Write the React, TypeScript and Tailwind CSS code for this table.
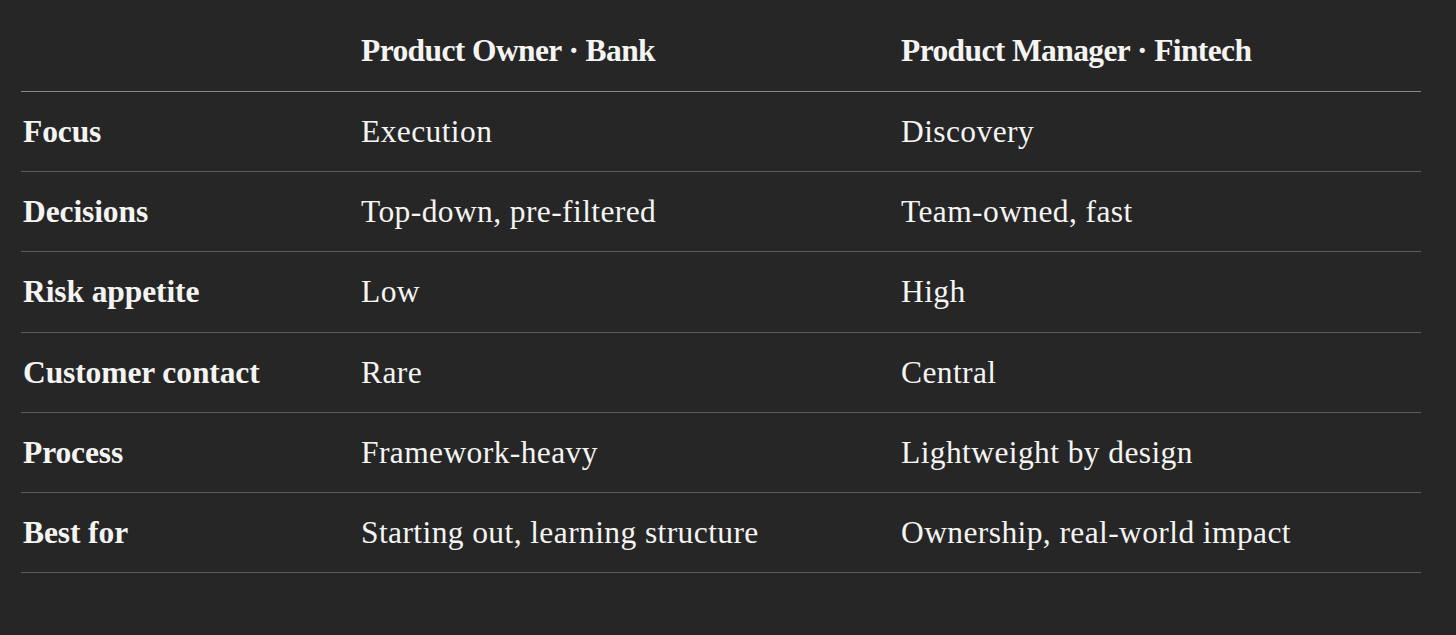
import React from 'react';

const rows = [
    { label: 'Focus', bank: 'Execution', fintech: 'Discovery' },
    { label: 'Decisions', bank: 'Top-down, pre-filtered', fintech: 'Team-owned, fast' },
    { label: 'Risk appetite', bank: 'Low', fintech: 'High' },
    { label: 'Customer contact', bank: 'Rare', fintech: 'Central' },
    { label: 'Process', bank: 'Framework-heavy', fintech: 'Lightweight by design' },
    { label: 'Best for', bank: 'Starting out, learning structure', fintech: 'Ownership, real-world impact' }
];

const App = () => {
    return (
        <div className="min-h-[635px] bg-[#262626] px-[21px] pt-[11px] text-[#f4f4f2] font-['Liberation_Serif',serif] text-[31.5px]">
            <div className="w-[1400px]">
                <div className="grid grid-cols-[340px_540px_1fr] h-[81px] items-center border-b border-[#8a8a8a]">
                    <div />
                    <div className="font-bold tracking-[-0.6px]">Product Owner · Bank</div>
                    <div className="font-bold tracking-[-0.6px]">Product Manager · Fintech</div>
                </div>
                {rows.map((row, index) => (
                    <div key={index} className="grid grid-cols-[340px_540px_1fr] h-[80.2px] items-center border-b border-[#5c5c5c]">
                        <div className="pl-[2px] font-bold tracking-[-0.1px]">{row.label}</div>
                        <div className="tracking-[0.4px]">{row.bank}</div>
                        <div className="tracking-[0.4px]">{row.fintech}</div>
                    </div>
                ))}
            </div>
        </div>
    );
};

export default App;
